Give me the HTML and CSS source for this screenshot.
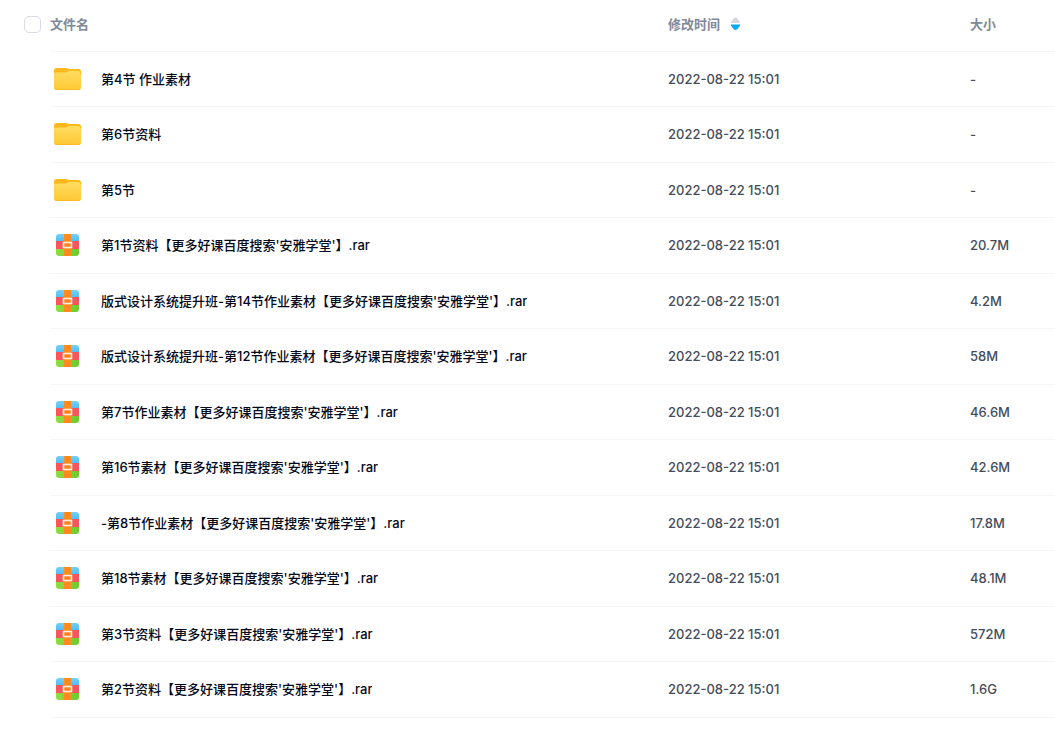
FILE: index.html
```html
<!DOCTYPE html>
<html lang="zh-CN">
<head>
  <meta charset="UTF-8" />
  <meta name="viewport" content="width=device-width, initial-scale=1.0"/>
  <title>文件列表</title>
  <link rel="stylesheet" href="styles.css">
</head>
<body>
  <!-- Shared icons -->
  <svg class="icon-defs" aria-hidden="true">
    <defs>
      <linearGradient id="folder-front" x1="0" y1="0" x2="0" y2="1">
        <stop offset="0" stop-color="#ffdc62"/>
        <stop offset="1" stop-color="#ffc934"/>
      </linearGradient>
      <linearGradient id="rar-blue" x1="0" y1="0" x2="0" y2="1">
        <stop offset="0" stop-color="#76d0fb"/>
        <stop offset="1" stop-color="#4dbaf5"/>
      </linearGradient>
      <linearGradient id="rar-green" x1="0" y1="0" x2="1" y2="0">
        <stop offset="0" stop-color="#8fdc44"/>
        <stop offset="1" stop-color="#6fca2c"/>
      </linearGradient>
      <clipPath id="rar-shape"><rect x="3" y="4" width="23" height="22" rx="3"/></clipPath>
    </defs>
    <symbol id="icon-folder" viewBox="0 0 30 30">
      <path d="M1 6.500A2.500 2.500 0 0 1 3.500 4H13q1.200 0 2 1h10.500A2.500 2.500 0 0 1 28 7.500V15H1z" fill="#ffb81c"/>
      <path d="M1 10.500Q1 8.500 3 8.500H12.500q1 0 1.700-.800Q14.900 7 16 7H25q2 0 2.200 2L28 11V23.500A2.500 2.500 0 0 1 25.500 26h-22A2.500 2.500 0 0 1 1 23.500z" fill="url(#folder-front)"/>
      <path d="M2 24.700q.600.800 1.800.800h21.400q1.200 0 1.800-.800" fill="none" stroke="#fbbb25"/>
    </symbol>
    <symbol id="icon-rar" viewBox="0 0 30 30">
      <g clip-path="url(#rar-shape)">
        <rect x="3" y="4" width="23" height="8" fill="url(#rar-blue)"/>
        <rect x="3" y="11" width="23" height="8" fill="#f8555c"/>
        <rect x="3" y="19" width="23" height="7" fill="url(#rar-green)"/>
        <rect x="11" y="4" width="7" height="22" fill="#ff8b1f"/>
      </g>
      <rect x="10.500" y="12.500" width="8" height="5" fill="#ff7f1a" stroke="#fff0dc" stroke-width="1.600"/>
    </symbol>
  </svg>

  <table class="file-table">
    <thead>
      <tr>
        <th class="col-check"><input type="checkbox" class="check-all" id="check-all" aria-label="全选"></th>
        <th class="col-name"><label for="check-all">文件名</label></th>
        <th class="col-time">
          <button type="button" class="sort-button">修改时间
            <svg class="sort-icon" viewBox="0 0 9 14" aria-hidden="true">
              <path d="M0 6V5L2.500 1.500Q4.500-.500 6.500 1.500L9 5V6z" fill="#d4d7de"/>
              <path d="M0 7.500V8.500L2.500 12Q4.500 14 6.500 12L9 8.500V7.500z" fill="#06a7ff"/>
            </svg>
          </button>
        </th>
        <th class="col-size">大小</th>
      </tr>
    </thead>
    <tbody id="file-list"></tbody>
  </table>

  <script>
    const files = [
      { type: 'folder', name: '第4节 作业素材', size: '-' },
      { type: 'folder', name: '第6节资料', size: '-' },
      { type: 'folder', name: '第5节', size: '-' },
      { type: 'rar', name: "第1节资料【更多好课百度搜索'安雅学堂'】.rar", size: '20.7M' },
      { type: 'rar', name: "版式设计系统提升班-第14节作业素材【更多好课百度搜索'安雅学堂'】.rar", size: '4.2M' },
      { type: 'rar', name: "版式设计系统提升班-第12节作业素材【更多好课百度搜索'安雅学堂'】.rar", size: '58M' },
      { type: 'rar', name: "第7节作业素材【更多好课百度搜索'安雅学堂'】.rar", size: '46.6M' },
      { type: 'rar', name: "第16节素材【更多好课百度搜索'安雅学堂'】.rar", size: '42.6M' },
      { type: 'rar', name: "-第8节作业素材【更多好课百度搜索'安雅学堂'】.rar", size: '17.8M' },
      { type: 'rar', name: "第18节素材【更多好课百度搜索'安雅学堂'】.rar", size: '48.1M' },
      { type: 'rar', name: "第3节资料【更多好课百度搜索'安雅学堂'】.rar", size: '572M' },
      { type: 'rar', name: "第2节资料【更多好课百度搜索'安雅学堂'】.rar", size: '1.6G' }
    ];

    document.getElementById('file-list').innerHTML = files.map(file => `
      <tr>
        <td class="col-check"></td>
        <td class="col-name">
          <div class="file-name">
            <svg class="file-icon" aria-hidden="true"><use href="#icon-${file.type}"/></svg>
            <a href="#">${file.name}</a>
          </div>
        </td>
        <td class="col-time">2022-08-22 15:01</td>
        <td class="col-size">${file.size}</td>
      </tr>`).join('');
  </script>
</body>
</html>
```

FILE: styles.css
```css
body {
  margin: 0;
  background: #fff;
  font-family: Inter, 'Noto Sans CJK SC', sans-serif;
  font-size: 13px;
  line-height: 20px;
  color: #454d5a;
}

.icon-defs {
  position: absolute;
  width: 0;
  height: 0;
}

.file-table {
  width: 100%;
  table-layout: fixed;
  border-collapse: separate;
  border-spacing: 0;
}

.file-table th,
.file-table td {
  box-sizing: border-box;
  padding: 0;
  text-align: left;
  vertical-align: middle;
  border-bottom: 1px solid #f5f6f8;
}

.file-table th {
  height: 52px;
  padding-bottom: 4px;
  font-weight: 600;
  color: #818999;
}

.file-table td {
  height: 56px;
  padding-bottom: 1px;
  font-weight: 500;
}

.file-table tr:nth-child(odd) td {
  height: 55px;
}

.file-table .col-check {
  width: 50px;
  border-bottom: none;
}

.file-table .col-time {
  width: 302px;
}

.file-table .col-size {
  width: 85px;
}

.check-all {
  display: block;
  appearance: none;
  box-sizing: border-box;
  width: 17px;
  height: 17px;
  margin: 0 0 0 24px;
  border: 1px solid #d9dae6;
  border-radius: 5px;
  background: #fff;
  cursor: pointer;
}

.check-all:checked {
  background: #06a7ff;
  border-color: #06a7ff;
}

.sort-button {
  display: flex;
  align-items: center;
  gap: 11px;
  padding: 0;
  border: none;
  background: none;
  font: inherit;
  color: inherit;
  cursor: pointer;
}

.sort-icon {
  width: 9px;
  height: 14px;
}

.file-name {
  display: flex;
  align-items: center;
  gap: 18px;
  padding-left: 3px;
}

.file-icon {
  flex: none;
  width: 30px;
  height: 30px;
}

.file-name a {
  overflow: hidden;
  text-overflow: ellipsis;
  white-space: nowrap;
  color: #03081a;
  text-decoration: none;
}

.file-name a:hover {
  color: #06a7ff;
}
```
